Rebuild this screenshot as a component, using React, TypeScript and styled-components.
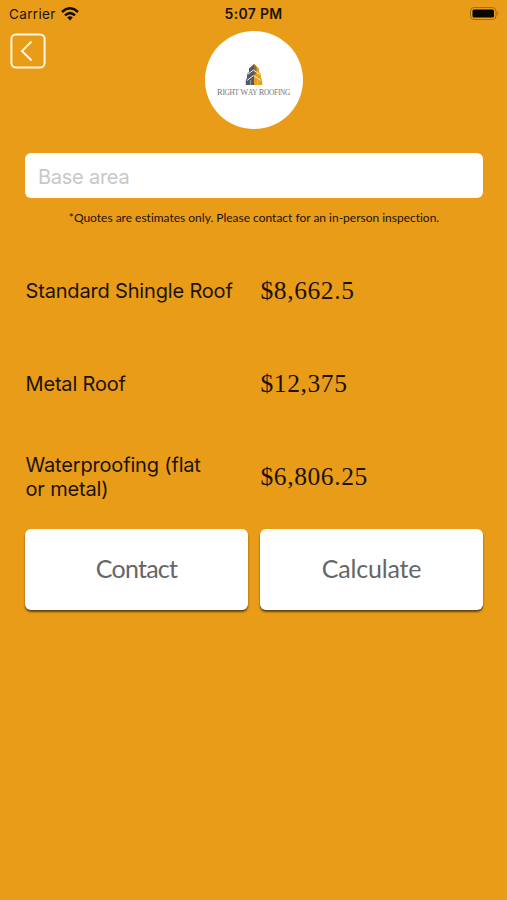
import React from "react";
import styled, { createGlobalStyle } from "styled-components";

const GlobalStyle = createGlobalStyle`
  * { box-sizing: border-box; }
  body { margin: 0; background: #e99c18; }
  button, input { font: inherit; border: 0; padding: 0; margin: 0; }
`;

const Screen = styled.main`
  display: flex;
  flex-direction: column;
  width: 507px;
  height: 900px;
  overflow: hidden;
  background: #e99c18;
  color: #1b1308;
  font-family: Inter, "Liberation Sans", sans-serif;
`;

const StatusBar = styled.div`
  display: grid;
  grid-template-columns: 1fr auto 1fr;
  align-items: center;
  height: 27px;
  padding: 0 7px 0 9px;
  font-size: 13.5px;
`;

const Carrier = styled.div`
  display: flex;
  align-items: center;
  gap: 5px;
  letter-spacing: 0.35px;
`;

const Time = styled.div`
  margin-left: -2px;
  font-size: 14px;
  font-weight: 600;
  letter-spacing: 0.3px;
`;

const Battery = styled.svg`
  justify-self: end;
`;

const Header = styled.header`
  display: grid;
  grid-template-columns: 1fr 98px 1fr;
  align-items: start;
  height: 126px;
  padding: 4px 10px 0;
`;

const BackButton = styled.button`
  display: flex;
  width: 36px;
  height: 36px;
  margin-top: 2px;
  background: none;
`;

const Logo = styled.div`
  display: flex;
  flex-direction: column;
  align-items: center;
  width: 98px;
  height: 98px;
  padding-top: 33px;
  border-radius: 50%;
  background: #fff;
`;

const LogoName = styled.div`
  margin-top: 1px;
  font: 7.3px/10px "Liberation Serif", serif;
  letter-spacing: -0.27px;
  white-space: nowrap;
  color: #77777b;
`;

const LogoCap = styled.span`
  font-size: 8.6px;
`;

const Content = styled.section`
  display: flex;
  flex-direction: column;
  padding: 0 24px 0 25px;
`;

const AreaInput = styled.input`
  width: 100%;
  height: 45px;
  padding: 3px 13px 0;
  border-radius: 6px;
  background: #fff;
  font-size: 20px;
  letter-spacing: -0.25px;
  outline: none;
  &::placeholder { color: #c8c8ca; opacity: 1; }
`;

const Note = styled.p`
  margin: 12px 0 0;
  text-align: center;
  font: 12px/16px Lato, sans-serif;
  font-variant-ligatures: none;
  letter-spacing: -0.01px;
  white-space: nowrap;
`;

const Quotes = styled.dl`
  display: grid;
  grid-auto-rows: 93px;
  margin: 18px 0 0;
`;

const QuoteRow = styled.div`
  display: grid;
  grid-template-columns: 235.5px 1fr;
  align-items: center;
`;

const QuoteLabel = styled.dt`
  max-width: 215px;
  padding-left: 0.5px;
  font-size: 20px;
  line-height: 24px;
  white-space: pre-line;
  letter-spacing: -0.17px;
`;

const QuotePrice = styled.dd`
  margin: 0;
  font: 25.5px/30px "Liberation Serif", serif;
  letter-spacing: 0.6px;
`;

const Actions = styled.div`
  display: grid;
  grid-template-columns: 1fr 1fr;
  gap: 12px;
  margin-top: 6px;
`;

const ActionButton = styled.button<{ $spacing: number }>`
  height: 81px;
  padding-bottom: 3px;
  border-radius: 6px;
  background: #fff;
  box-shadow: 0 2px 2px rgba(55, 40, 12, 0.75);
  color: #666;
  font: 25px/30px Lato, sans-serif;
  letter-spacing: ${(p) => p.$spacing}px;
`;

const quotes = [
  { label: "Standard Shingle Roof", price: "$8,662.5" },
  { label: "Metal Roof", price: "$12,375" },
  { label: "Waterproofing (flat\nor metal)", price: "$6,806.25" },
];

const Wifi = () => (
  <svg width="18" height="14" viewBox="0 0 18 14" fill="none" stroke="#150e04" strokeWidth="2.5">
    <path d="M1 5Q9-2.4 17 5M4 8.4Q9 3.9 14 8.4" />
    <path d="M6.2 10.5Q9 8.1 11.8 10.5L9 13.4Z" fill="#150e04" stroke="none" />
  </svg>
);

const Tower = () => (
  <svg width="18" height="22" viewBox="0 0 18 22">
    <path d="M9 0L4 4.5V8L2 10V14L.8 16V21H9Z" fill="#555963" />
    <path d="M9 0L14 4.5V8L16 10V14L17.2 16V21H9Z" fill="#e5a01c" />
    <path d="M9 0L11.5 3V9L9 12Z" fill="#8b6e42" />
    <path d="M2.5 10.5L8.5 6L15.5 11M2 16.5L8.5 11.5L16 16.5" fill="none" stroke="#f4f1ec" strokeWidth="1" />
    <path d="M5.5 21V16M12.5 21V16" stroke="#ded8d0" strokeWidth=".5" />
  </svg>
);

export default function App() {
  return (
    <>
      <GlobalStyle />
      <Screen>
        <StatusBar>
          <Carrier><span>Carrier</span><Wifi /></Carrier>
          <Time>5:07 PM</Time>
          <Battery width="31" height="14" viewBox="0 0 31 14">
            <rect x="1.5" y="0.5" width="25.5" height="12" rx="3.5" fill="none" stroke="#9c6b15" />
            <rect x="3.5" y="2.5" width="21.5" height="8" rx="1.5" fill="#080500" />
            <path d="M28.3 4.5Q30.3 6.5 28.3 8.5Z" fill="#9c6b15" />
          </Battery>
        </StatusBar>
        <Header>
          <BackButton aria-label="Back">
            <svg width="36" height="36" viewBox="0 0 36 36" fill="none" stroke="#fff6df" strokeWidth="2">
              <rect x="1.4" y="1.4" width="33.2" height="33.2" rx="4.5" />
              <path d="M21.5 8.5L12 18L21.5 27.5" />
            </svg>
          </BackButton>
          <Logo>
            <Tower />
            <LogoName>
              <LogoCap>R</LogoCap>IGHT <LogoCap>W</LogoCap>AY <LogoCap>R</LogoCap>OOFING
            </LogoName>
          </Logo>
        </Header>
        <Content>
          <AreaInput placeholder="Base area" />
          <Note>*Quotes are estimates only. Please contact for an in-person inspection.</Note>
          <Quotes>
            {quotes.map((q) => (
              <QuoteRow key={q.label}>
                <QuoteLabel>{q.label}</QuoteLabel>
                <QuotePrice>{q.price}</QuotePrice>
              </QuoteRow>
            ))}
          </Quotes>
          <Actions>
            <ActionButton $spacing={-0.75}>Contact</ActionButton>
            <ActionButton $spacing={-0.2}>Calculate</ActionButton>
          </Actions>
        </Content>
      </Screen>
    </>
  );
}
